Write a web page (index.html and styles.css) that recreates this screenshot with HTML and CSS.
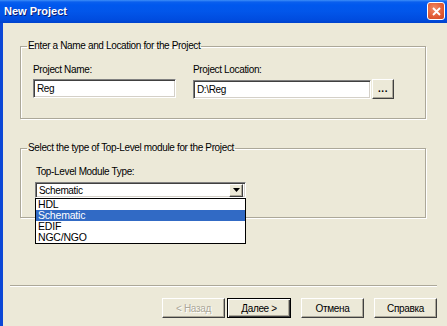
FILE: index.html
```html
<!DOCTYPE html>
<html lang="en">

<head>
  <meta charset="UTF-8" />
  <title>New Project</title>
  <link rel="stylesheet" href="styles.css">
</head>

<body>
  <div class="window">
    <div class="titlebar">
      <span class="title">New Project</span>
      <span class="close">
        <svg width="9" height="9" viewBox="0 0 9 9"><path d="M1 1L8 8M8 1L1 8" stroke="#fff" stroke-width="1.8" /></svg>
      </span>
    </div>
    <div class="client">
      <fieldset class="group group-name">
        <legend>Enter a Name and Location for the Project</legend>
        <div class="fields">
          <div class="field field-name">
            <label for="name">Project Name:</label>
            <input id="name" class="edit" type="text" value="Reg" />
          </div>
          <div class="field field-location">
            <label for="location">Project Location:</label>
            <div class="path-row">
              <input id="location" class="edit" type="text" value="D:\Reg" />
              <button class="btn browse" type="button">...</button>
            </div>
          </div>
        </div>
      </fieldset>
      <fieldset class="group group-type">
        <legend>Select the type of Top-Level module for the Project</legend>
        <div class="field">
          <label>Top-Level Module Type:</label>
          <div class="combo">
            <span class="combo-value">Schematic</span>
            <span class="combo-btn">
              <svg width="7" height="4" viewBox="0 0 7 4"><path d="M0 0H7L3.5 4Z" fill="#000" /></svg>
            </span>
            <ul class="combo-list">
              <li>HDL</li>
              <li class="selected">Schematic</li>
              <li>EDIF</li>
              <li>NGC/NGO</li>
            </ul>
          </div>
        </div>
      </fieldset>
      <div class="footer">
        <div class="separator"></div>
        <div class="buttons">
          <button class="btn" type="button" disabled>&lt; Назад</button>
          <button class="btn default" type="button">Далее &gt;</button>
          <button class="btn spaced" type="button">Отмена</button>
          <button class="btn spaced" type="button">Справка</button>
        </div>
      </div>
    </div>
  </div>
</body>

</html>
```

FILE: styles.css
```css
* {
  box-sizing: border-box;
  margin: 0;
  padding: 0;
}

body {
  width: 447px;
  height: 326px;
  overflow: hidden;
  font-family: "Liberation Sans", Arial, sans-serif;
  font-size: 10px;
  letter-spacing: -0.35px;
  color: #000;
}

.window {
  display: flex;
  flex-direction: column;
  height: 326px;
  background: #0b47d6;
}

.titlebar {
  height: 23px;
  display: flex;
  align-items: center;
  justify-content: space-between;
  padding: 0 2px 1px 4px;
  background: linear-gradient(#3d8ef8 0, #0a5fee 2px, #0058ee 5px, #0256ea 50%, #004cdf 85%, #0042cc 100%);
}

.title {
  color: #fff;
  font-weight: bold;
  font-size: 11px;
  letter-spacing: 0;
  text-shadow: 1px 1px 0 #0a1e78;
}

.close {
  width: 18px;
  height: 18px;
  display: flex;
  align-items: center;
  justify-content: center;
  border: 1px solid #fff;
  border-radius: 3px;
  background: radial-gradient(circle at 40% 35%, #f08a66, #e15a33 60%, #c94421);
}

.client {
  flex: 1;
  display: flex;
  flex-direction: column;
  margin-left: 3px;
  padding: 17px 0 8px 17px;
  background: #ece9d8;
}

.group {
  width: 406px;
  border: 1px solid #aca899;
  box-shadow: 1px 1px 0 #fff, inset 1px 1px 0 #fff;
  padding: 12px 12px 19px 12px;
}

.group legend {
  margin-left: -6px;
  padding: 0 1px;
  line-height: 12px;
}

.group-type {
  margin-top: 23px;
  padding-left: 15px;
}

.group-type legend {
  margin-left: -9px;
}

.field label {
  display: block;
  line-height: 12px;
  margin-bottom: 3px;
}

.group-type .field label {
  margin-bottom: 4px;
}

.fields {
  display: flex;
  gap: 17px;
}

.field-name .edit {
  width: 143px;
}

.path-row {
  display: flex;
  align-items: center;
  gap: 1px;
}

.path-row .edit {
  width: 178px;
}

.edit {
  height: 19px;
  padding: 0 3px;
  font: inherit;
  letter-spacing: inherit;
  background: #fff;
  border: 1px solid;
  border-color: #808080 #fff #fff #808080;
  box-shadow: inset 1px 1px 0 #404040, inset -1px -1px 0 #d4d0c8;
  outline: none;
}

.btn {
  height: 20px;
  width: 63px;
  font: inherit;
  letter-spacing: inherit;
  color: #000;
  background: #ece9d8;
  border: 1px solid;
  border-color: #fff #404040 #404040 #fff;
  box-shadow: inset -1px -1px 0 #aca899;
}

.btn:disabled {
  color: #aca899;
  text-shadow: 1px 1px 0 #fff;
}

.btn.default {
  width: 64px;
  border: 1px solid #000;
  box-shadow: inset 1px 1px 0 #fff, inset -1px -1px 0 #404040, inset -2px -2px 0 #aca899;
}

.browse {
  width: 22px;
  font-weight: bold;
  letter-spacing: 0.5px;
  line-height: 10px;
}

.combo {
  position: relative;
  width: 211px;
  height: 16px;
  margin-left: -1px;
  display: flex;
  align-items: center;
  justify-content: space-between;
  background: #fff;
  border: 1px solid;
  border-color: #808080 #fff #fff #808080;
  box-shadow: inset 1px 1px 0 #404040, inset -1px -1px 0 #d4d0c8;
  padding: 0 2px 0 3px;
}

.combo-btn {
  width: 14px;
  height: 13px;
  display: flex;
  align-items: center;
  justify-content: center;
  background: #ece9d8;
  border: 1px solid;
  border-color: #fff #404040 #404040 #fff;
  box-shadow: inset -1px -1px 0 #aca899;
}

.combo-list {
  position: absolute;
  top: 15px;
  left: -1px;
  width: 211px;
  list-style: none;
  background: #fff;
  border: 1px solid #000;
}

.combo-list li {
  height: 11px;
  line-height: 11px;
  padding-left: 2px;
  font-size: 10.5px;
  letter-spacing: -0.2px;
}

.combo-list li.selected {
  background: #316ac5;
  color: #fff;
}

.footer {
  margin-top: auto;
  margin-left: -10px;
}

.separator {
  width: 427px;
  border-top: 1px solid #aca899;
  border-bottom: 1px solid #fff;
}

.buttons {
  display: flex;
  justify-content: flex-end;
  gap: 2px;
  margin-top: 11px;
  margin-right: 10px;
}

.buttons .spaced {
  margin-left: 8px;
}
```
